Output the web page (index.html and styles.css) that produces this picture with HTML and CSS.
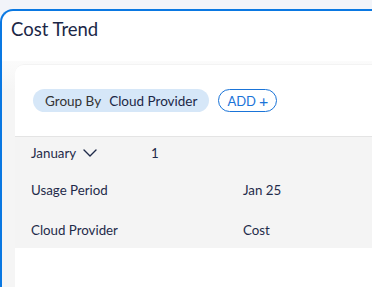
FILE: index.html
```html
<!DOCTYPE html>
<html lang="en">
<head>
    <meta charset="UTF-8">
    <meta name="viewport" content="width=device-width, initial-scale=1.0">
    <link rel="stylesheet" href="styles.css">
</head>
<body>

<div class="card">
    <div class="card-title">Cost Trend</div>

    <div class="card-body">
        <div class="panel">
            <div class="toolbar">
                <div class="chip">
                    <span class="chip-label">Group By</span>
                    <span class="chip-value">Cloud Provider</span>
                </div>
                <button class="add-btn">ADD <span class="plus">+</span></button>
            </div>

            <div class="table">
                <div class="row row-month">
                    <div class="month">
                        January
                        <svg class="chevron" width="14" height="8" viewBox="0 0 14 8">
                            <path d="M1 1 L7 7 L13 1" fill="none" stroke="#1f2b4a" stroke-width="1.4" stroke-linecap="round" stroke-linejoin="round"/>
                        </svg>
                    </div>
                    <div class="count">1</div>
                </div>
                <div class="row row-mid">
                    <div class="cell first">Usage Period</div>
                    <div class="cell">Jan 25</div>
                </div>
                <div class="row row-last">
                    <div class="cell first">Cloud Provider</div>
                    <div class="cell">Cost</div>
                </div>
            </div>
        </div>
    </div>
</div>

</body>
</html>
```

FILE: styles.css
```css
body {
    margin: 0;
    padding-top: 9px;
    background: #f2f4f9;
    font-family: Lato, "Open Sans", sans-serif;
    color: #1f2b4a;
    height: 287px;
    box-sizing: border-box;
    overflow: hidden;
}
.card {
    background: #fff;
    border-top: 2px solid #0a78e2;
    border-left: 2px solid #0a78e2;
    border-top-left-radius: 13px;
    height: 278px;
    box-sizing: border-box;
}
.card-title {
    font-size: 18.5px;
    padding: 7px 0 0 9px;
    height: 50px;
    box-sizing: border-box;
    color: #1b2747;
}
.card-body {
    padding: 3px 0 0 13px;
    height: 226px;
    background: linear-gradient(to bottom, #fbfbfb, #f5f5f5 30px);
}
.panel {
    background: #fff;
    border-top-left-radius: 9px;
    border-top: 1px solid #f3f3f3;
    padding-top: 24px;
    height: 200px;
}
.toolbar {
    display: flex;
    align-items: center;
    gap: 9px;
    padding-left: 18px;
}
.chip {
    display: flex;
    align-items: center;
    gap: 8px;
    height: 23px;
    padding: 0 12px;
    background: #d6e7f8;
    border-radius: 12px;
    font-size: 13.5px;
}
.chip-label {
    color: #333;
}
.chip-value {
    color: #1b2747;
}
.add-btn {
    height: 23px;
    padding: 0 8px;
    background: #fff;
    border: 1px solid #1a74d8;
    border-radius: 12px;
    color: #1a74d8;
    font-family: inherit;
    font-size: 13px;
    display: flex;
    align-items: center;
    gap: 3px;
}
.plus {
    font-size: 16px;
    line-height: 1;
}
.table {
    margin-top: 24px;
    border-top: 1px solid #e4e4e4;
    background: #f4f4f4;
    font-size: 13.3px;
}
.row {
    display: flex;
    align-items: center;
    padding-left: 16px;
}
.row-month {
    height: 31px;
}
.row-mid {
    height: 43px;
}
.row-last {
    height: 37px;
}
.month {
    display: flex;
    align-items: center;
    gap: 7px;
    width: 120px;
}
.cell.first {
    width: 212px;
}
```
